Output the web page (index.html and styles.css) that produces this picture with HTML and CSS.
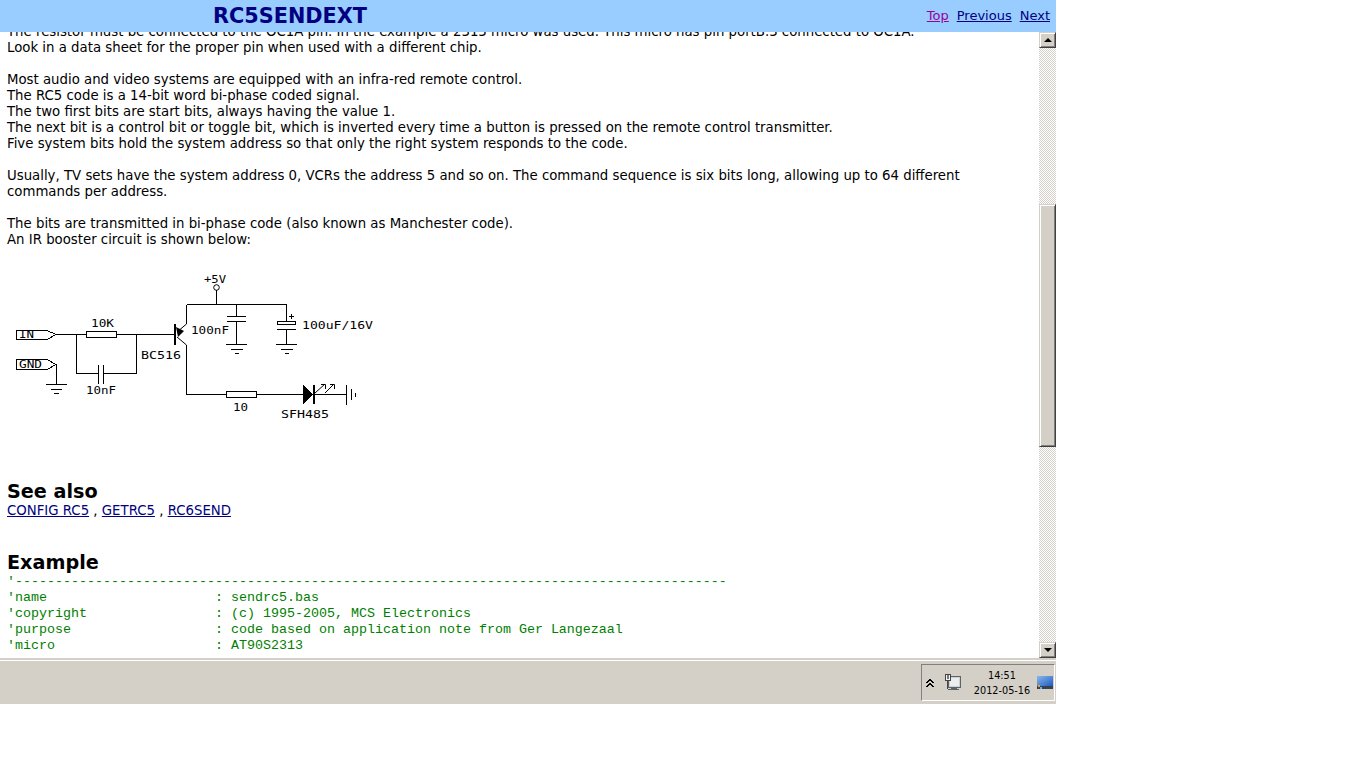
FILE: index.html
```html
<!DOCTYPE html>
<html lang="en">
<head>
<meta charset="utf-8">
<title>RC5SENDEXT</title>
<link rel="stylesheet" href="styles.css">
</head>
<body>
<div class="window">
  <header class="topbar">
    <h1 class="title">RC5SENDEXT</h1>
    <nav class="nav">
      <a class="visited" href="#top">Top</a>
      <a href="#prev">Previous</a>
      <a href="#next">Next</a>
    </nav>
  </header>
  <div class="viewport">
    <main class="content">
      <div class="scrolled">
        <p class="para">The resistor must be connected to the OC1A pin. In the example a 2313 micro was used. This micro has pin portB.3 connected to OC1A.<br>Look in a data sheet for the proper pin when used with a different chip.</p>
        <p class="para">Most audio and video systems are equipped with an infra-red remote control.<br>The RC5 code is a 14-bit word bi-phase coded signal.<br>The two first bits are start bits, always having the value 1.<br>The next bit is a control bit or toggle bit, which is inverted every time a button is pressed on the remote control transmitter.<br>Five system bits hold the system address so that only the right system responds to the code.</p>
        <p class="para">Usually, TV sets have the system address 0, VCRs the address 5 and so on. The command sequence is six bits long, allowing up to 64 different<br>commands per address.</p>
        <p class="para">The bits are transmitted in bi-phase code (also known as Manchester code).<br>An IR booster circuit is shown below:</p>
        <svg class="schematic" width="390" height="170" viewBox="0 260 390 170" shape-rendering="crispEdges">
          <g fill="none" stroke="#000" stroke-width="1">
            <path d="M56.5 334.5H175M76.5 334.5V373.5H98.5M103.5 373.5H136.5V334.5"/>
            <path d="M98.5 365V384M103.5 365V384"/>
            <rect x="86.500" y="331.500" width="30" height="6" fill="#fff"/>
            <path d="M16.5 330.5H47L56 334.5L47 339.5H16.5Z"/>
            <path d="M16.5 359.5H47L56 364.5L47 369.5H16.5Z"/>
            <path d="M56.5 365V384.5M46 384.5H67M51 389.5H62M54 393.5H59"/>
            <path d="M186.5 304.5V324M186.5 345V394.5H226M256 394.5H303M186.5 304.5H286.5"/>
            <rect x="226.500" y="391.500" width="30" height="6" fill="#fff"/>
            <path d="M216.5 290V304.5"/>
            <path d="M236.5 304.5V316.5M227 316.5H246M227 321.5H246M236.5 321.5V344.5M226 344.5H247M231 349.5H243M235 353.5H239"/>
            <path d="M286.5 304.5V321M277.5 321.5H295.5V324.5H277.5ZM277 329.5H296M286.5 329.5V344.5M276 344.5H297M281 349.5H293M285 353.5H289"/>
            <path d="M289 316.5H294M291.5 314V319"/>
            <path d="M313.5 394.5H347M346.5 385V405M351.5 389V400M355.5 393V397"/>
          </g>
          <g fill="none" stroke="#000" shape-rendering="auto">
            <circle cx="216.500" cy="287.500" r="2.800"/>
            <path d="M186.500 324L177 332M177 337L186.500 345"/>
            <path d="M315 393L325 384M321 384.500H325.500V389M325 393L334 384M330 384.500H334.500V389"/>
          </g>
          <path class="solid" d="M174 324h2v21h-2zM303 385L313 394.500L303 404Z"/>
          <path class="solid" d="M176 327L184 331L178 337Z" shape-rendering="auto"/>
          <path class="solid" d="M313 385h1.500v19H313Z"/>
          <g class="circuit-text" shape-rendering="auto">
            <text x="204" y="283" textLength="22" lengthAdjust="spacingAndGlyphs">+5V</text>
            <text x="91" y="327" textLength="23" lengthAdjust="spacingAndGlyphs">10K</text>
            <text x="19" y="338" textLength="15" lengthAdjust="spacingAndGlyphs">IN</text>
            <text x="19" y="368" textLength="23" lengthAdjust="spacingAndGlyphs">GND</text>
            <text x="191" y="334" textLength="38" lengthAdjust="spacingAndGlyphs">100nF</text>
            <text x="302" y="329" textLength="71" lengthAdjust="spacingAndGlyphs">100uF/16V</text>
            <text x="141" y="359" textLength="40" lengthAdjust="spacingAndGlyphs">BC516</text>
            <text x="86" y="394" textLength="30" lengthAdjust="spacingAndGlyphs">10nF</text>
            <text x="233" y="411" textLength="15" lengthAdjust="spacingAndGlyphs">10</text>
            <text x="281" y="418" textLength="48" lengthAdjust="spacingAndGlyphs">SFH485</text>
          </g>
        </svg>
        <h2 class="heading see-also">See also</h2>
        <p class="links"><a href="#a">CONFIG RC5</a> , <a href="#b">GETRC5</a> , <a href="#c">RC6SEND</a></p>
        <h2 class="heading example">Example</h2>
        <pre class="code">'-----------------------------------------------------------------------------------------
'name                     : sendrc5.bas
'copyright                : (c) 1995-2005, MCS Electronics
'purpose                  : code based on application note from Ger Langezaal
'micro                    : AT90S2313</pre>
      </div>
    </main>
    <div class="scrollbar">
      <button class="sb-btn" aria-label="Up"><span class="arrow-up"></span></button>
      <div class="track">
        <div class="thumb"></div>
      </div>
      <button class="sb-btn" aria-label="Down"><span class="arrow-down"></span></button>
    </div>
  </div>
  <footer class="taskbar">
    <div class="tray">
      <svg class="chevrons" width="8" height="10" viewBox="0 0 8 10" shape-rendering="crispEdges">
        <path d="M3 0h2v1h-2zM2 1h4v1h-4zM1 2h2v1h-2zM5 2h2v1h-2zM3 4h2v1h-2zM2 5h4v1h-4zM1 6h2v1h-2zM5 6h2v1h-2zM0 3h2v1h-2zM6 3h2v1h-2zM0 7h2v1h-2zM6 7h2v1h-2z" transform="translate(0 1)"/>
      </svg>
      <svg class="net" width="18" height="18" viewBox="0 0 18 18" shape-rendering="crispEdges">
        <rect x="4.500" y="2.500" width="12" height="11" fill="#c8d0d4" stroke="#5c6468"/>
        <rect x="6" y="4" width="9" height="8" fill="#eceeee"/>
        <path d="M4 15.500H15M7 14.500H13" stroke="#5c6468" fill="none"/>
        <rect x="1.500" y="0.500" width="5" height="6" fill="#f2f2ee" stroke="#444"/>
        <path d="M3.500 1V5M4.500 1V5" stroke="#777"/>
        <path d="M3.500 7V15" stroke="#444"/>
      </svg>
      <div class="clock">
        <span>14:51</span>
        <span>2012-05-16</span>
      </div>
      <svg class="desktop" width="16" height="14" viewBox="0 0 16 14" shape-rendering="crispEdges">
        <defs>
          <linearGradient id="sky" x1="0" y1="0" x2="1" y2="1">
            <stop offset="0" stop-color="#8ab8e8"/>
            <stop offset="1" stop-color="#1f5cc4"/>
          </linearGradient>
        </defs>
        <rect width="16" height="10" fill="url(#sky)"/>
        <rect y="10" width="16" height="3" fill="#39424e"/>
        <rect x="1" y="9" width="2" height="2" fill="#e0a040"/>
        <rect x="3" y="11" width="2" height="2" fill="#60b0f0"/>
      </svg>
    </div>
  </footer>
</div>
</body>
</html>
```
FILE: styles.css
```css
* { box-sizing: border-box; }
html, body { margin: 0; padding: 0; background: #fff; }
body { width: 1366px; height: 768px; overflow: hidden; font-family: "DejaVu Sans", Verdana, sans-serif; color: #000; }
.window { width: 1056px; height: 704px; display: flex; flex-direction: column; }
.topbar { flex: 0 0 32px; height: 32px; background: #99ccff; display: flex; align-items: center; justify-content: space-between; padding: 0 6px 0 213px; position: relative; z-index: 1; }
.title { margin: 0; font-size: 20.8px; line-height: 30px; font-weight: bold; color: #000080; }
.nav { display: flex; gap: 8px; font-size: 13px; padding-bottom: 2px; }
a { color: #000080; }
a.visited { color: #990099; }
.viewport { flex: 0 0 626px; display: flex; overflow: hidden; }
.content { flex: 1 1 auto; overflow: hidden; position: relative; }
.scrolled { margin-top: -8px; padding-left: 7px; font-size: 13.3px; line-height: 16px; }
.para { margin: 0 0 16px; }
.schematic { display: block; margin: -4px 0 0 -7px; }
.solid { fill: #000; }
.circuit-text { font-family: "DejaVu Sans Mono", monospace; font-size: 10px; fill: #000; }
.heading { margin: 0; font-size: 19.2px; font-weight: bold; line-height: 22px; }
.see-also { margin-top: 51px; }
.links { margin: 0; font-size: 13.3px; line-height: 16px; }
.links a { color: #000080; }
.example { margin-top: 33px; }
.code { margin: 0; font-family: "Liberation Mono", "Courier New", monospace; font-size: 13.33px; line-height: 16px; color: #008000; }
.scrollbar { flex: 0 0 17px; display: flex; flex-direction: column; }
.sb-btn { flex: 0 0 16px; height: 16px; padding: 0; margin: 0; background: #d4d0c8; border: 1px solid; border-color: #d4d0c8 #404040 #404040 #d4d0c8; display: flex; align-items: center; justify-content: center; box-shadow: inset 1px 1px 0 #fff, inset -1px -1px 0 #808080; }
.arrow-up { width: 0; height: 0; border: 4px solid transparent; border-top: 0; border-bottom-color: #000; }
.arrow-down { width: 0; height: 0; border: 4px solid transparent; border-bottom: 0; border-top-color: #000; }
.track { flex: 1 1 auto; padding-top: 156px; background-color: #fff; background-image: conic-gradient(#d4d0c8 25%, #fff 0 50%, #d4d0c8 0 75%, #fff 0); background-size: 2px 2px; }
.thumb { height: 243px; background: #d4d0c8; border: 1px solid; border-color: #d4d0c8 #404040 #404040 #d4d0c8; box-shadow: inset 1px 1px 0 #fff, inset -1px -1px 0 #808080; }
.taskbar { flex: 0 0 46px; background: #d4d0c8; padding: 6px 1px 3px 921px; display: flex; box-shadow: inset 0 2px 0 #d4d0c8, inset 0 3px 0 #fff; }
.tray { width: 134px; height: 37px; border: 1px solid; border-color: #808080 #fff #fff #808080; display: flex; align-items: center; padding-left: 4px; }
.chevrons { flex: none; margin-right: 10px; }
.net { flex: none; }
.clock { flex: none; width: 68px; margin-left: 6px; display: flex; flex-direction: column; align-items: center; font-size: 9.7px; line-height: 15px; color: #000; }
.desktop { flex: none; margin-left: 1px; margin-top: 1px; }
```
